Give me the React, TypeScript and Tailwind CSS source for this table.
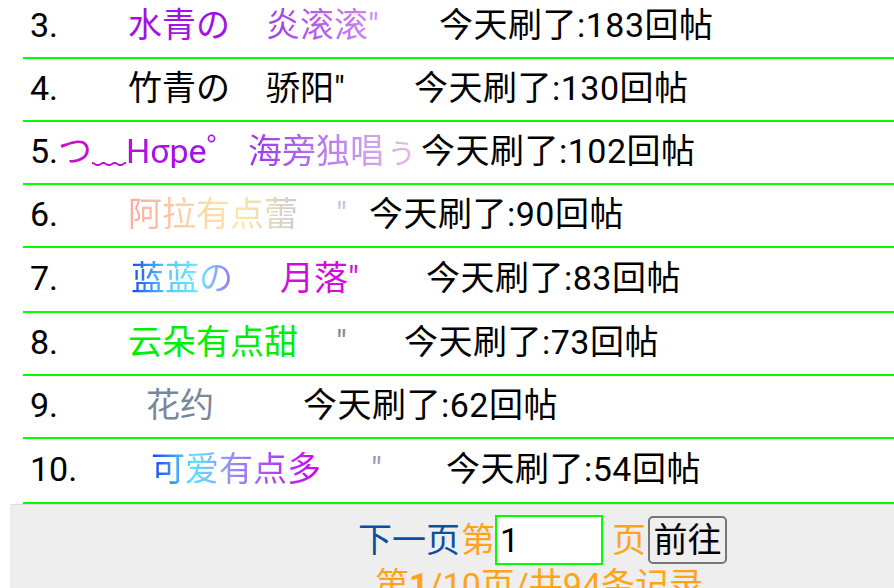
import React from 'react'

interface Seg {
    text: string
    cls: string
}

interface Row {
    num: string
    numW: string
    segs: Seg[]
    count: number
    tall?: boolean
}

// colours / box widths read off the screenshot, per row
const rows: Row[] = [
    {
        num: '3.', numW: 'w-[98px]', count: 183,
        segs: [
            { text: '水青の', cls: 'w-[138px] text-[#a012e8]' },
            { text: '炎滚滚″', cls: 'w-[173px] bg-[linear-gradient(to_right,#a03ee8,#b860ea,#d090ee)]' },
        ],
    },
    {
        num: '4.', numW: 'w-[98px]', count: 130,
        segs: [
            { text: '竹青の', cls: 'w-[138px] text-black' },
            { text: '骄阳″', cls: 'w-[148px] text-black' },
        ],
    },
    {
        num: '5.', numW: 'w-[28px]', count: 102,
        segs: [
            { text: 'つ﹏Hσpe゜', cls: 'w-[190px] bg-[linear-gradient(to_right,#d010c0,#b010e0,#9a10f0)]' },
            { text: '海旁独唱ぅ', cls: 'w-[173px] bg-[linear-gradient(to_right,#9a30f0,#b068f0,#c898ec,#e4c0e4)]' },
        ],
    },
    {
        num: '6.', numW: 'w-[98px]', count: 90,
        segs: [
            { text: '阿拉有点蕾', cls: 'w-[208px] bg-[linear-gradient(to_right,#ffa8a0,#fbd0a8,#f8e8a8,#d0c8d0)]' },
            { text: '″', cls: 'w-[33px] text-[#c4c4e6]' },
        ],
    },
    {
        num: '7.', numW: 'w-[101px]', count: 83, tall: true,
        segs: [
            { text: '蓝蓝の', cls: 'w-[149px] bg-[linear-gradient(to_right,#1a44f0,#50c8ff,#70e8ff,#a070f0)]' },
            { text: '月落″', cls: 'w-[146px] text-[#d00ee0]' },
        ],
    },
    {
        num: '8.', numW: 'w-[98px]', count: 73,
        segs: [
            { text: '云朵有点甜', cls: 'w-[208px] text-[#00ee00]' },
            { text: '″', cls: 'w-[68px] text-[#8a8a8a]' },
        ],
    },
    {
        num: '9.', numW: 'w-[116px]', count: 62,
        segs: [
            { text: '花约', cls: 'w-[157px] text-[#778899]' },
        ],
    },
    {
        num: '10.', numW: 'w-[121px]', count: 54, tall: true,
        segs: [
            { text: '可爱有点多', cls: 'w-[220px] bg-[linear-gradient(to_right,#1a40f0,#60e0ff,#9a88f0,#b040f0,#cc00f0)]' },
            { text: '″', cls: 'w-[75px] text-[#9a9ab8]' },
        ],
    },
]

function Name({ seg }: { seg: Seg }) {
    const [w, ...rest] = seg.cls.split(' ')
    const gradient = seg.cls.includes('linear-gradient')
    return (
        <span className={`shrink-0 whitespace-nowrap ${w}`}>
            <span className={gradient ? `inline-block bg-clip-text text-transparent ${rest.join(' ')}` : rest.join(' ')}>
                {seg.text}
            </span>
        </span>
    )
}

export default function App() {
    return (
        <div className="w-[894px] h-[588px] overflow-hidden bg-white text-black text-[34px] leading-none font-['Roboto','Noto_Sans_CJK_SC',sans-serif]">
            <div className="pl-[10px]">
                <div className="-mt-[4px] ml-[13px]">
                    {rows.map((r) => (
                        <div
                            key={r.num}
                            className={`flex items-center pl-[7px] pb-[3px] border-b-2 border-[#00ff00] ${r.tall ? 'h-[65px]' : 'h-[63px]'}`}
                        >
                            <span className={`shrink-0 ${r.numW}`}>{r.num}</span>
                            {r.segs.map((s) => (
                                <Name key={s.text} seg={s} />
                            ))}
                            <span className="shrink-0 whitespace-nowrap tracking-[0.5px]">今天刷了:{r.count}回帖</span>
                        </div>
                    ))}
                </div>

                <div className="bg-[#eeeeee] border-t border-[#dddddd] h-[90px] pt-[10px]">
                    <div className="flex items-center pl-[348px] h-[50px]">
                        <span className="text-[#0b4ea2]">下一页</span>
                        <span className="text-[#ffa31a] ml-[1px]">第</span>
                        <input
                            readOnly
                            value="1"
                            className="w-[108px] h-[50px] border-2 border-[#00ff00] bg-white pl-[3px] text-[34px] text-black outline-none"
                        />
                        <span className="text-[#ffa31a] ml-[9px]">页</span>
                        <button className="ml-[2px] w-[79px] h-[48px] border-2 border-[#767676] rounded-[5px] bg-[#efefef] text-[34px] text-black leading-none">
                            前往
                        </button>
                    </div>
                    <div className="pl-[365px] mt-[3px] text-[#ffa31a] whitespace-nowrap">
                        第<b>1</b>/10页/共94条记录
                    </div>
                </div>
            </div>
        </div>
    )
}
